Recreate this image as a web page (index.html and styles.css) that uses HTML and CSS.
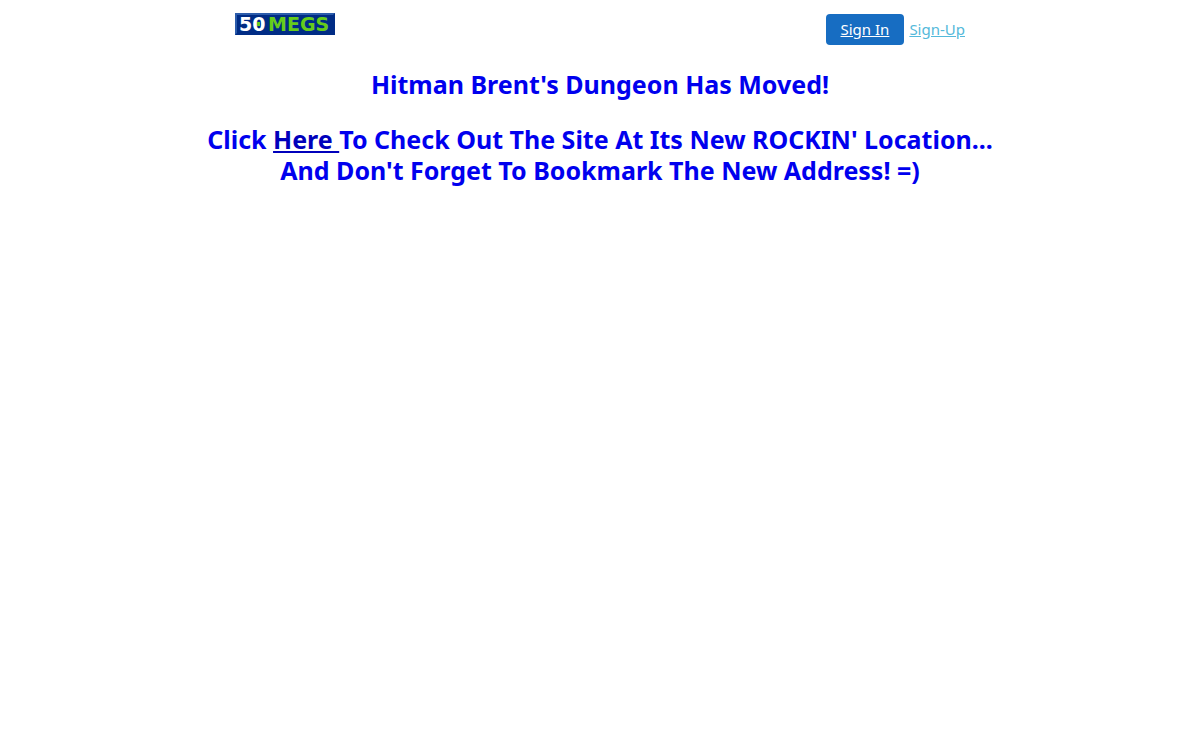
FILE: index.html
```html
<!DOCTYPE html>
<html lang="en">
<head>
    <meta charset="UTF-8">
    <meta name="viewport" content="width=device-width, initial-scale=1.0">
    <title>Hitman Brent's Dungeon</title>
    <link rel="stylesheet" href="styles.css">
</head>
<body>
    <header class="topbar">
        <a href="/" class="logo" aria-label="50megs">
            <svg width="100" height="22" viewBox="0 0 100 22">
                <rect width="100" height="22" fill="#002c85"/>
                <path d="M0 22V0h100l-2 2H2v18z" fill="#2c5cab"/>
                <text x="4" y="18" class="logo-text">50<tspan class="logo-word" x="33">MEGS</tspan></text>
                <rect x="22" y="9" width="3" height="4" fill="#66cc1a"/>
            </svg>
        </a>
        <nav class="account">
            <a href="/signin" class="signin">Sign In</a>
            <a href="/signup" class="signup">Sign-Up</a>
        </nav>
    </header>

    <main class="notice">
        <h2>Hitman Brent's Dungeon Has Moved!</h2>
        <h2>Click <a href="/new">Here </a>To Check Out The Site At Its New ROCKIN' Location...<br>
        And Don't Forget To Bookmark The New Address! =)</h2>
    </main>
</body>
</html>
```
FILE: styles.css
```css
* { margin: 0; padding: 0; box-sizing: border-box; }
body {
    background: #fff;
    font-family: "Noto Sans", "Open Sans", sans-serif;
}
.topbar {
    max-width: 730px;
    margin: 0 auto;
    padding-top: 13px;
    display: flex;
    justify-content: space-between;
    align-items: flex-start;
}
.logo svg { display: block; }
.logo-text {
    font: bold 19px "DejaVu Sans", sans-serif;
    fill: #fff;
}
.logo-word { fill: #66cc1a; }
.account {
    display: flex;
    align-items: center;
    gap: 5px;
    padding-top: 1px;
    font-size: 15px;
    line-height: 21px;
}
.signin {
    background: #176dc2;
    color: #fff;
    padding: 5px 15px;
    border-radius: 4px;
}
.signup { color: #54b9da; }
.notice {
    padding: 24px 8px;
    text-align: center;
    color: #0000ee;
}
.notice h2 {
    font-size: 25px;
    line-height: 31px;
    margin-bottom: 24px;
}
.notice a { color: #0000bb; }
```
